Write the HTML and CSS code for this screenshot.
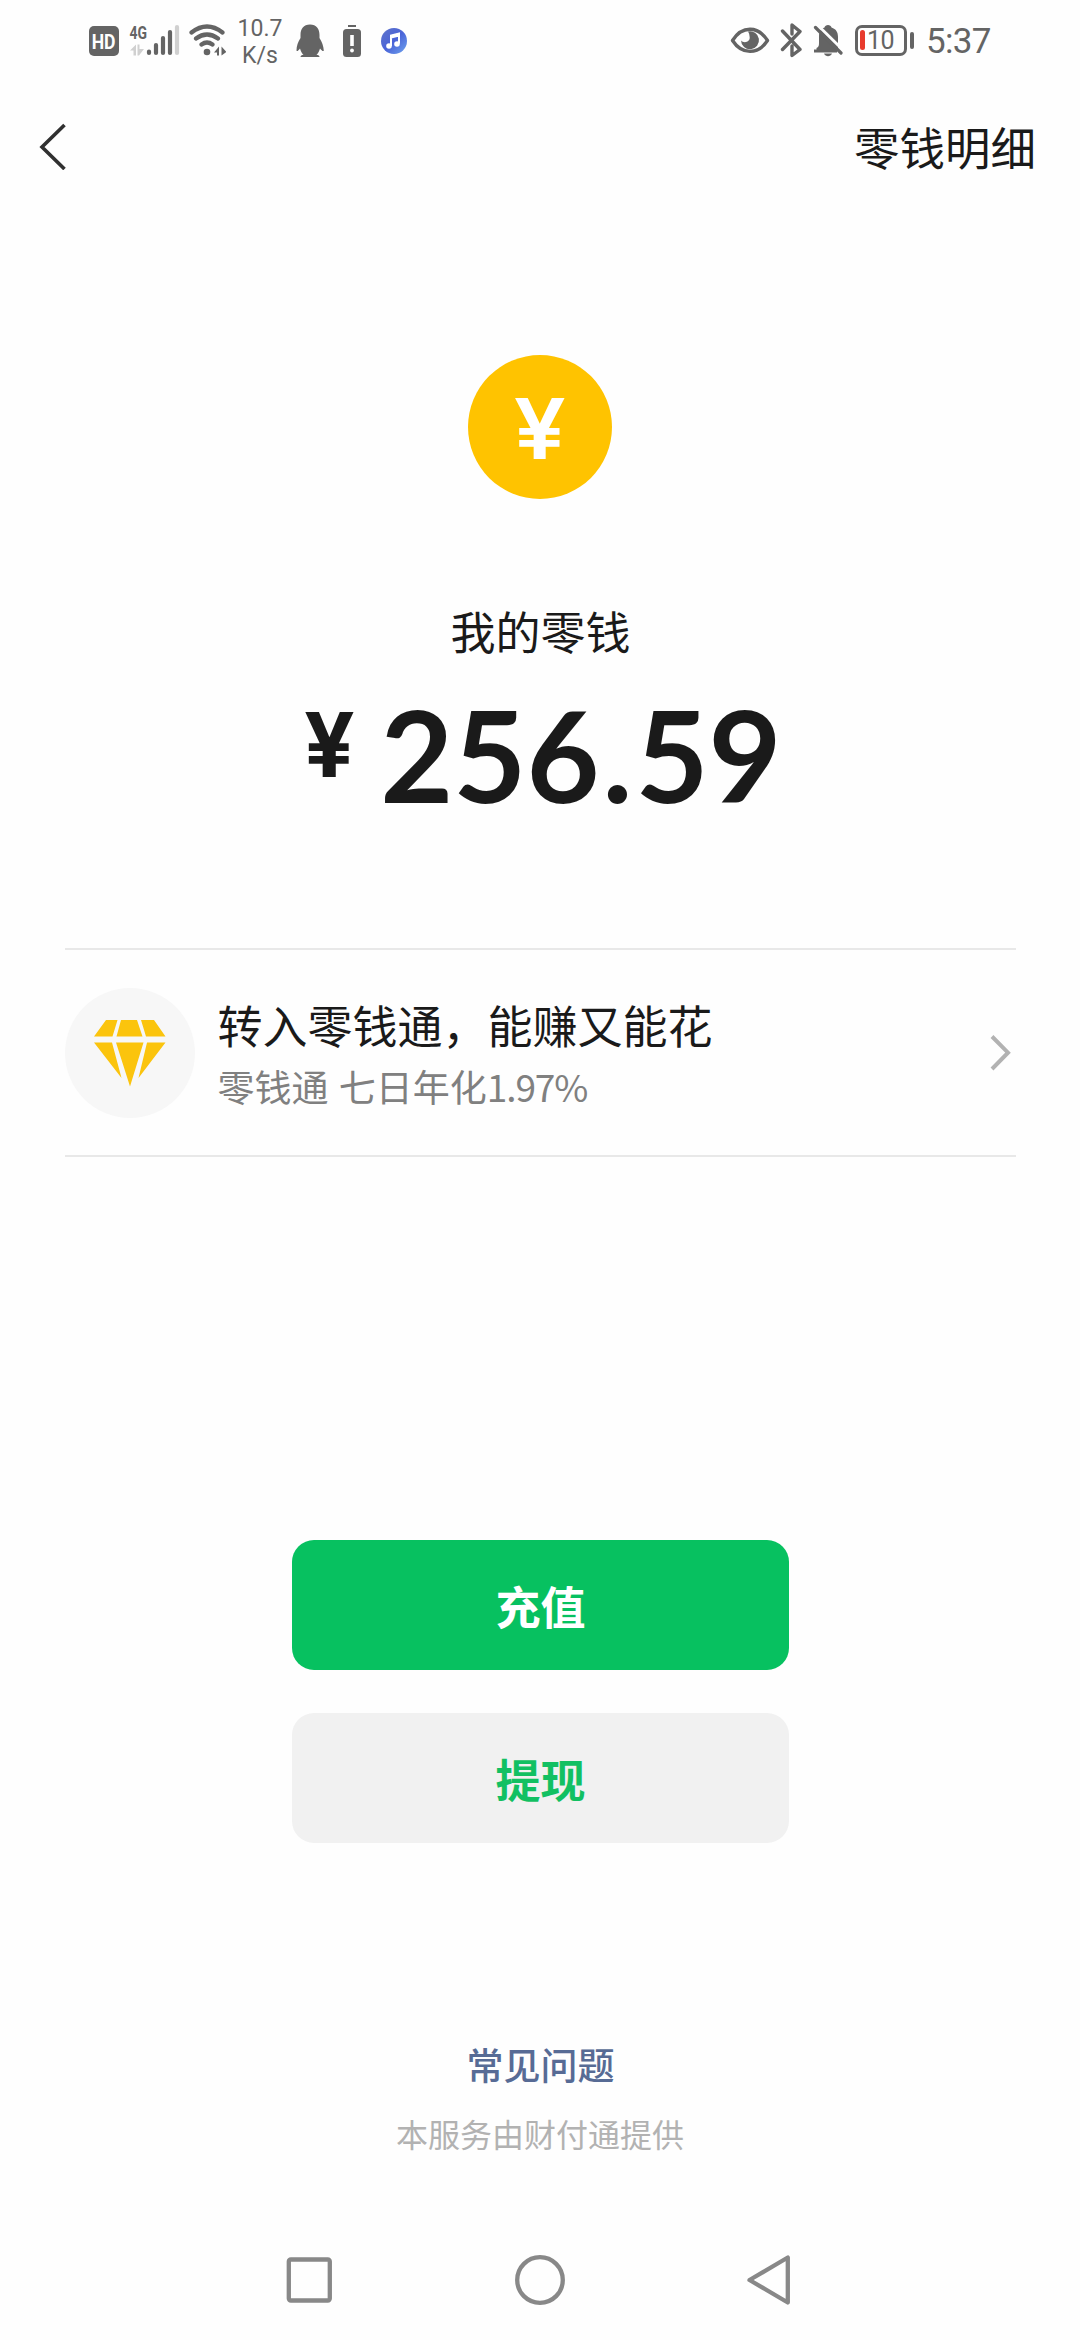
FILE: index.html
```html
<!DOCTYPE html>
<html lang="zh-CN">
<head>
<meta charset="utf-8">
<title>我的零钱</title>
<link rel="stylesheet" href="styles.css">
</head>
<body>
<div class="status">
  <div class="status-group status-left">
    <span class="hd"><span>HD</span></span>
    <svg class="signal" width="52" height="40" viewBox="129 20 52 40">
      <text x="129.500" y="38.500" class="net" textLength="17.500" lengthAdjust="spacingAndGlyphs">4G</text>
      <path d="M130 50.500 136 44.500V55.500H133.500V50.500ZM137.500 44.500H139.500V49H144L139 55.500H137.500Z" fill="#d0d0d0"/>
      <g stroke="#646464" stroke-width="4.200" stroke-linecap="round"><path d="M149 51.500V53M156 45V53M163 38V53M170 32V53"/><path d="M177 27V53" stroke="#d0d0d0"/></g>
    </svg>
    <svg class="wifi" width="38" height="40" viewBox="188 20 38 40">
      <g fill="none" stroke="#646464" stroke-width="4.200" stroke-linecap="round"><path d="M191.500 32.500Q207 20.500 222.500 32.500M196 38.500Q207 30.500 218 38.500M201.500 44.500Q207 40.500 212.500 44.500"/></g>
      <circle cx="207" cy="52" r="3.300" fill="#646464"/>
      <path d="M214 52.500 219 46.500V55.500H217V52.500ZM221.500 46.500 226.500 52 221.500 55.500Z" fill="#646464"/>
    </svg>
    <div class="speed"><span>10.7</span><span>K/s</span></div>
    <svg class="penguin" width="28" height="40" viewBox="296 20 28 40">
      <path d="M310 24.500C303.500 24.500 300.500 29 300.500 35V38C298 42 296.500 46 296.500 50.500C297 52 298.500 50.500 300 48.500C300.800 51.500 302 53.500 303.500 54.800C301.500 55 300.500 56 300.500 57H319.500C319.500 56 318.500 55 316.500 54.800C318 53.500 319.200 51.500 320 48.500C321.500 50.500 323.500 52 323.800 50.500C323.500 46 322 42 319.500 38V35C319.500 29 316.500 24.500 310 24.500Z" fill="#646464"/>
    </svg>
    <svg class="alert-battery" width="18" height="40" viewBox="343 20 18 40">
      <path d="M348 26H356" stroke="#646464" stroke-width="2"/><rect x="343" y="29" width="18" height="28" rx="3.500" fill="#646464"/>
      <path d="M352 35V46" stroke="#fff" stroke-width="3.600"/><circle cx="352" cy="50.500" r="1.900" fill="#fff"/>
    </svg>
    <svg class="music" width="28" height="40" viewBox="380 20 28 40">
      <defs><linearGradient id="tune" x1="0" y1="0" x2="1" y2="1"><stop offset="0" stop-color="#5f74c9"/><stop offset=".5" stop-color="#4a63d8"/><stop offset="1" stop-color="#6ea4ee"/></linearGradient></defs>
      <circle cx="394" cy="41" r="13" fill="url(#tune)"/>
      <path d="M391 46V35.500L399 33.500V43.500M391 37.500 399 35.500" fill="none" stroke="#fff" stroke-width="2"/><circle cx="389" cy="46" r="2.800" fill="#fff"/><circle cx="397" cy="44" r="2.800" fill="#fff"/>
    </svg>
  </div>
  <div class="status-group status-right">
    <svg class="eye" width="40" height="40" viewBox="729 20 40 40">
      <path d="M731.500 40.500C741 25.500 757 25.500 766.500 40.500C757 55 741 55 731.500 40.500Z" fill="none" stroke="#646464" stroke-width="3.400" stroke-linejoin="round"/>
      <path d="M747 31.500A9 9 0 1 1 740 40.500C743 44 750 42 748.500 36C748.500 34.500 748 33 747 31.500Z" fill="#646464"/>
    </svg>
    <svg class="bluetooth" width="22" height="40" viewBox="779 20 22 40">
      <path d="M781.500 31 799 49.500 791 55.500V46M791 34V25L799 31.500 781.500 49.500" fill="none" stroke="#646464" stroke-width="3.400" stroke-linecap="round" stroke-linejoin="round"/>
    </svg>
    <svg class="bell" width="30" height="40" viewBox="812 20 30 40">
      <path d="M815.500 50.500V48C817.500 47 818 46 818 43V36C818 31 820.500 28.500 823.500 27.500C824 24 830 24 830.500 27.500C835 29 837 32 837 37V50.500Z" fill="#646464"/><path d="M813 51H836" stroke="#646464" stroke-width="3"/>
      <path d="M823 53.500H831C829.500 57 824.500 57 823 53.500Z" fill="#646464"/>
      <path d="M816 24.500 843 51" stroke="#fefefe" stroke-width="3"/><path d="M814.500 27.500 840 53" stroke="#646464" stroke-width="3.200" stroke-linecap="round"/>
    </svg>
    <div class="battery"><i class="charge"></i><span>10</span></div><i class="nub"></i>
    <span class="time">5:37</span>
  </div>
</div>
<header class="nav">
  <svg width="27" height="48" viewBox="39 122 27 48"><path d="M64.500 125 42 147 64.500 169" fill="none" stroke="#303030" stroke-width="3.600"/></svg>
  <a class="detail">零钱明细</a>
</header>
<main class="wallet">
  <div class="coin"><span>¥</span></div>
  <h1 class="label">我的零钱</h1>
  <div class="amount"><span class="yen">¥</span><span class="digits">256<span class="dot">.</span>59</span></div>
  <a class="promo">
    <svg class="gem" width="130" height="130" viewBox="65 988 130 130">
      <circle cx="130" cy="1053" r="65" fill="#f7f7f7"/>
      <g fill="#fbc40d"><path d="M106 1020H117.500L112.500 1036.500H94ZM121 1020H137L142.500 1036.500H116.500ZM141 1020H154L165.500 1036.500H146ZM94 1042.500H112L121.500 1078ZM116 1042.500H143.500L130 1086.500ZM147 1042.500H165.500L138.500 1078Z"/></g>
    </svg>
    <div class="promo-text"><div class="promo-title">转入零钱通，能赚又能花</div><div class="promo-sub">零钱通 七日年化<span>1.97%</span></div></div>
    <svg class="chevron" width="22" height="38" viewBox="989 1034 22 38"><path d="M991 1036.500 1007 1052.700 991 1069" fill="none" stroke="#b2b2b2" stroke-width="4"/></svg>
  </a>
  <div class="actions">
    <button class="btn primary">充值</button>
    <button class="btn secondary">提现</button>
  </div>
  <a class="faq">常见问题</a>
  <p class="provider">本服务由财付通提供</p>
</main>
<footer class="system-nav">
  <svg width="52" height="54" viewBox="283 2253 52 54"><rect x="288.800" y="2259.500" width="41" height="41" rx="2" /></svg>
  <svg width="54" height="54" viewBox="513 2253 54 54"><circle cx="540" cy="2280" r="22.800"/></svg>
  <svg width="48" height="54" viewBox="745 2253 48 54"><path d="M749.500 2280 787.800 2257.500V2302.500Z"/></svg>
</footer>
</body>
</html>
```
FILE: styles.css
```css
* { box-sizing: border-box; }
body { margin: 0; width: 1080px; height: 2340px; overflow: hidden; background: #fefefe; color: #1a1a1a; font-family: "Noto Sans CJK SC", sans-serif; display: flex; flex-direction: column; }
svg { display: block; flex: none; }
.status { height: 80px; padding: 0 90px 0 89px; display: flex; justify-content: space-between; color: #646464; font-family: Roboto, sans-serif; }
.status-group { display: flex; align-items: center; }
.hd { width: 30px; height: 30px; margin-top: 2px; border-radius: 5px; background: #646464; color: #fefefe; font: 700 20px/32px Roboto, sans-serif; display: flex; justify-content: center; }
.hd span { transform: scaleX(.88); }
.signal { margin-left: 10px; }
.net { font: 700 18px Roboto, sans-serif; fill: #646464; }
.wifi { margin-left: 7px; }
.speed { width: 44px; margin-left: 12px; display: flex; flex-direction: column; align-items: center; font-size: 23px; line-height: 27px; padding-top: 3px; }
.penguin { margin-left: 14px; }
.alert-battery { margin-left: 19px; }
.music { margin-left: 19px; }
.bluetooth { margin-left: 10px; }
.bell { margin-left: 11px; }
.battery { width: 52px; height: 31px; margin-left: 12px; border: 3px solid #646464; border-radius: 7px; display: flex; align-items: center; padding-left: 2px; font-size: 25px; letter-spacing: -.5px; }
.charge { width: 5px; height: 20px; border-radius: 3px; background: #e83a2c; margin-right: 2px; }
.nub { width: 4px; height: 17px; margin-left: 3px; border-radius: 2px; background: #646464; }
.time { margin-left: 12px; font-size: 35px; letter-spacing: -.7px; line-height: 40px; padding-top: 4px; width: 64px; white-space: nowrap; }
.nav { height: 132px; padding: 0 44px 0 39px; display: flex; align-items: center; justify-content: space-between; }
.detail { font-size: 45.500px; line-height: 64px; }
.wallet { display: flex; flex-direction: column; align-items: center; padding-top: 143px; }
.coin { width: 144px; height: 144px; border-radius: 50%; background: #ffc300; color: #fff; display: flex; justify-content: center; align-items: center; font: 600 84px/84px Inter, sans-serif; padding-top: 4px; }
.coin span { transform: scaleX(1.1); }
.label { margin: 99px 0 0 1px; font-size: 45px; font-weight: 400; line-height: 66px; }
.amount { height: 126px; margin-top: 28px; display: flex; align-items: flex-start; font-family: Lato, sans-serif; font-weight: 700; }
.yen { font: 700 89px/89px Inter, sans-serif; width: 58px; padding: 8px 0 0 4px; display: flex; justify-content: center; }
.digits { font-size: 126px; line-height: 126px; margin-left: 24px; }
.dot { display: inline-block; width: 36px; text-align: center; }
.promo { width: 951px; height: 209px; margin-top: 130px; border-top: 2px solid #e8e8e8; border-bottom: 2px solid #e8e8e8; display: flex; align-items: center; }
.promo-text { flex: 1; margin-left: 23px; padding-top: 5px; white-space: nowrap; }
.promo-title { font-size: 45px; line-height: 62px; }
.promo-sub { font-size: 37px; line-height: 60px; color: #808080; word-spacing: 2px; }
.promo-sub span { letter-spacing: -1.100px; }
.chevron { margin-right: 4px; }
.actions { display: flex; flex-direction: column; gap: 43px; margin-top: 383px; }
.btn { width: 497px; height: 130px; padding: 2px 0 0 1px; border: 0; border-radius: 22px; font: 700 45px/64px "Noto Sans CJK SC", sans-serif; }
.primary { background: #07c160; color: #fff; }
.secondary { background: #f1f1f1; color: #12c062; }
.faq { margin: 194px 0 0 1px; font-size: 37px; font-weight: 500; line-height: 54px; color: #576b95; }
.provider { margin: 19px 0 0; font-size: 32px; line-height: 46px; color: #b2b2b2; }
.system-nav { margin-top: auto; height: 87px; padding: 0 287px 0 283px; display: flex; justify-content: space-between; }
.system-nav svg { fill: none; stroke: #888; stroke-width: 4.300px; stroke-linejoin: round; }
```
